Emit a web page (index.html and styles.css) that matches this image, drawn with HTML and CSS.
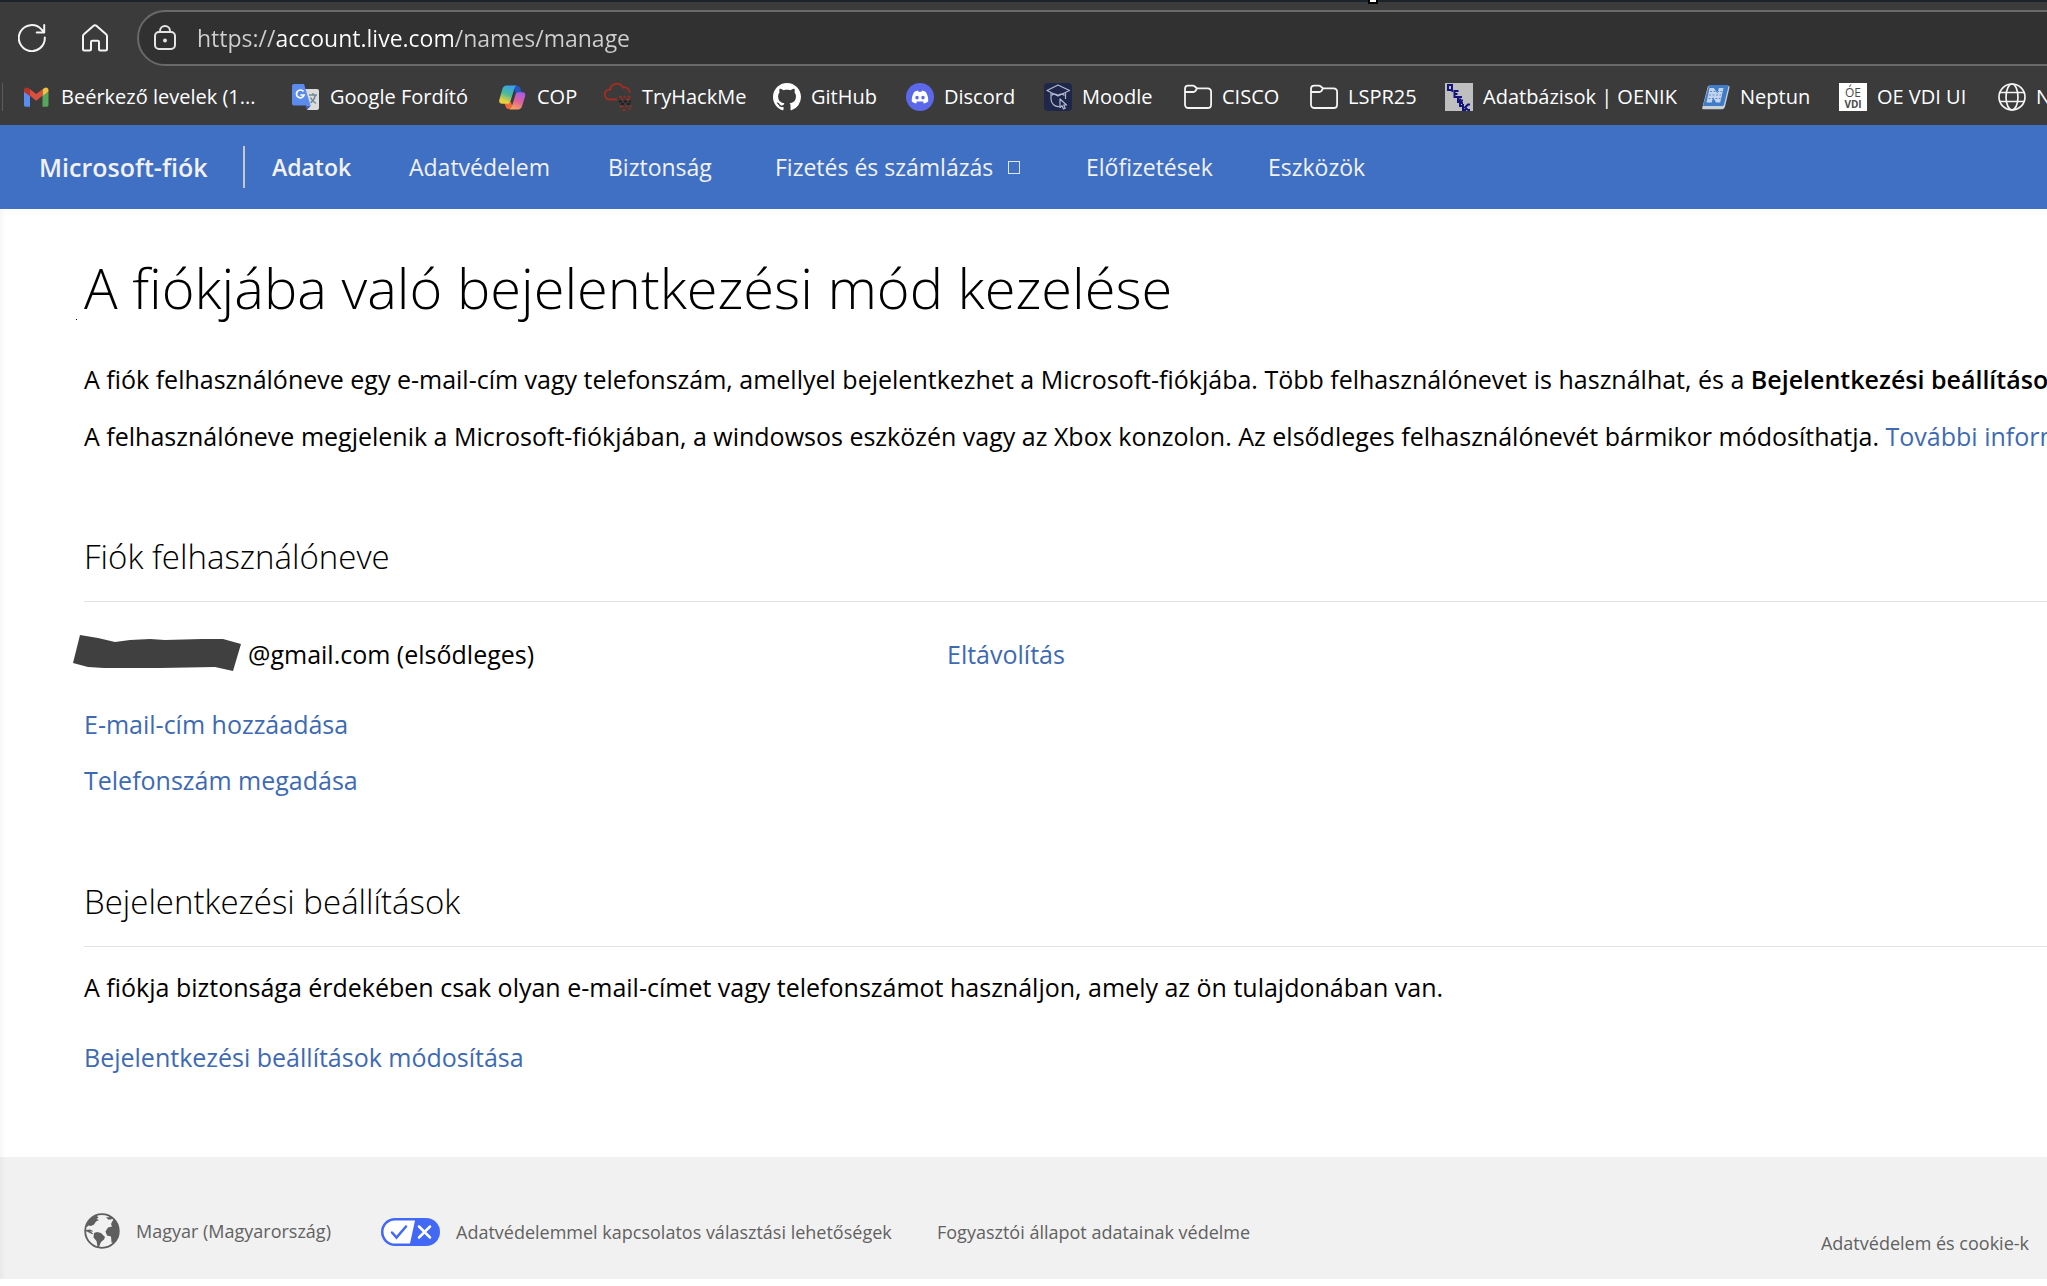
FILE: index.html
```html
<!DOCTYPE html>
<html lang="hu">
<head>
<meta charset="utf-8">
<title>A fiókjába való bejelentkezési mód kezelése</title>
<link rel="stylesheet" href="styles.css">
</head>
<body>
<div class="browser">
  <span class="window-handle"></span>
  <div class="toolbar">
    <div class="tools">
      <button class="tool" type="button" aria-label="Frissítés">
        <svg width="28" height="28" viewBox="0 0 28 28" fill="none" stroke="#f4f4f4" stroke-width="2" stroke-linecap="round" stroke-linejoin="round"><path d="M26.8 13.5a13 13 0 1 1-3.6-8.4L26 8.2M26.2 1v7.4h-7.5"/></svg>
      </button>
      <button class="tool" type="button" aria-label="Kezdőlap">
        <svg width="28" height="28" viewBox="0 0 28 28" fill="none" stroke="#f4f4f4" stroke-width="2" stroke-linejoin="round"><path d="M2 12.2c0-.8.3-1.4.9-1.9L12.6 1.8c.8-.7 2-.7 2.8 0l9.7 8.5c.6.5.9 1.100.9 1.900V25c0 .9-.6 1.500-1.500 1.500h-5c-.9 0-1.500-.6-1.500-1.500v-7c0-.8-.5-1.300-1.300-1.300h-5.400c-.8 0-1.300.5-1.300 1.300v7c0 .9-.6 1.500-1.500 1.500h-5C2.600 26.500 2 25.900 2 25z"/></svg>
      </button>
    </div>
    <div class="address">
      <svg width="24" height="26" viewBox="0 0 24 26" fill="none" stroke="#e4e4e4" stroke-width="2"><rect x="2" y="7" width="20" height="17" rx="4"/><path d="M7 7V6a5 5 0 0 1 10 0v1"/><circle cx="12" cy="15.500" r="2" fill="#e4e4e4" stroke="none"/></svg>
      <input class="url" type="text" aria-label="Címsor" value="https://account.live.com/names/manage">
    </div>
  </div>
  <nav class="bookmarks" aria-label="Kedvencek">
    <a href="#"><svg width="28" height="28" viewBox="0 0 28 28"><path d="M1 8.500v13.500c0 1 .8 1.700 1.700 1.700H7V11.500z" fill="#5b8df0"/><path d="M19.500 11.500v12.200h4.300c1 0 1.700-.8 1.700-1.700V8.500z" fill="#58a55c"/><path d="M19.500 6.500v6.500l6-4.500V7c0-2.200-2.400-3.300-4.200-2z" fill="#f2bf42"/><path d="M7 12.800V6.200l6.200 4.700 6.300-4.700v6.600l-6.300 4.900z" fill="#d8503f"/><path d="M1 7v1.700l6 4.500V6.300L5.300 5C3.400 3.700 1 4.800 1 7z" fill="#b53629"/></svg><span>Beérkező levelek (1...</span></a>
    <a href="#"><svg width="28" height="28" viewBox="0 0 28 28"><path d="M13 6h12c1.200 0 2 .8 2 2v17c0 1.200-.8 2-2 2H15z" fill="#dcdcdc"/><path d="M13.500 22.500H19L15 27z" fill="#3f5fb8"/><path d="M2 1h10l6.500 21.500H2c-1.200 0-2-.8-2-2V3c0-1.200.8-2 2-2z" fill="#5c8bee"/><path d="M11.500 8.600a3.900 3.900 0 1 0 .6 3.400H8.400" fill="none" stroke="#fff" stroke-width="1.700"/><path d="M17 12h8M21 10v2M23.500 12c-1 4-3 6.500-5 8M18.500 14.500c1 2.500 3 4.500 5.500 6" fill="none" stroke="#6f8a96" stroke-width="1.400"/></svg><span>Google Fordító</span></a>
    <a href="#"><svg width="28" height="28" viewBox="0 0 28 28"><defs><linearGradient id="copA" x1=".6" y1="0" x2=".2" y2="1"><stop offset="0" stop-color="#3aa0ee"/><stop offset=".45" stop-color="#48b99c"/><stop offset=".85" stop-color="#e8d13c"/></linearGradient><linearGradient id="copB" x1=".7" y1="0" x2=".3" y2="1"><stop offset="0" stop-color="#a75be8"/><stop offset=".5" stop-color="#e0619c"/><stop offset="1" stop-color="#f6a45c"/></linearGradient></defs><path d="M14 3h4.500c1.700 0 2.500 1.200 3 2.800l1.300 4.200h-6z" fill="#2456c4"/><path d="M14 26H9.500c-1.700 0-2.500-1.200-3-2.800L5 19h7z" fill="#ec6a3c"/><path d="M7.500 2.500H18c-1.600.3-2.200 1.600-2.800 3.500l-3.700 12c-.5 1.600-1.500 2.700-3.200 2.700H3c-2.300 0-3.300-1.800-2.600-4.300l3-10.500c.6-2.100 2-3.400 4.100-3.400z" fill="url(#copA)"/><path d="M19 26.500H10c1.600-.3 2.400-1.600 3-3.500l3.400-11c.5-1.600 1.500-2.700 3.200-2.700h4c2.300 0 3.200 1.800 2.500 4.300l-3 9.500c-.6 2.100-2 3.400-4.100 3.400z" fill="url(#copB)"/></svg><span>COP</span></a>
    <a href="#"><svg width="28" height="28" viewBox="0 0 28 28" fill="none" stroke="#a52d22" stroke-width="1.800"><path d="M13 16.500H5.500a5 5 0 0 1-.5-9.900h1.200A6.800 6.800 0 0 1 19 4.500c3.600-.5 6.300 1.700 6.800 5"/><path d="M15 14h3m1.500 0h2m2 0h3M17 16.500h2m3 0h4M15.500 23.500h4m2 0h2m2 0h2M18.500 27h3m3-1h2" stroke-width="1.300"/><path d="M15 18.500h3m2 0h3m2 0h2M17 21h3m3 0h3" stroke="#202020"/></svg><span>TryHackMe</span></a>
    <a href="#"><svg width="28" height="28" viewBox="0 0 16 16"><path fill="#fff" d="M8 0C3.580 0 0 3.580 0 8c0 3.540 2.290 6.530 5.470 7.590.4.070.55-.17.55-.38 0-.19-.01-.82-.01-1.490-2.010.37-2.530-.49-2.690-.94-.09-.23-.48-.94-.82-1.130-.28-.15-.68-.52-.01-.53.63-.01 1.080.58 1.230.82.72 1.210 1.870.87 2.330.66.07-.52.28-.87.51-1.070-1.780-.2-3.640-.89-3.640-3.950 0-.87.31-1.590.82-2.150-.08-.2-.36-1.020.08-2.120 0 0 .67-.21 2.200.82.64-.18 1.320-.27 2-.27s1.360.09 2 .27c1.530-1.040 2.200-.82 2.200-.82.44 1.100.16 1.920.08 2.120.51.56.82 1.270.82 2.150 0 3.070-1.870 3.750-3.650 3.950.29.25.54.73.54 1.480 0 1.070-.01 1.930-.01 2.200 0 .21.15.46.55.38A8.010 8.010 0 0 0 16 8c0-4.420-3.580-8-8-8z"/></svg><span>GitHub</span></a>
    <a href="#"><svg width="28" height="28" viewBox="0 0 28 28"><circle cx="14" cy="14" r="14" fill="#5b68ea"/><path fill="#fff" fill-rule="evenodd" d="M8.400 8.700c1.200-.6 2.300-.9 3.500-1.100l.6 1.200h3l.6-1.200c1.200.2 2.400.5 3.500 1.100 2 3 2.900 6.200 2.600 9.800-1.300 1-2.700 1.600-4.200 2l-1-1.600.9-.5H10.100l.9.500-1 1.600c-1.500-.4-2.900-1-4.200-2-.3-3.600.6-6.800 2.600-9.800zM11 12.700a1.700 1.900 0 1 0 0 3.800 1.700 1.900 0 0 0 0-3.800zm6 0a1.700 1.900 0 1 0 0 3.800 1.700 1.900 0 0 0 0-3.800z"/></svg><span>Discord</span></a>
    <a href="#"><svg width="28" height="28" viewBox="0 0 28 28"><rect width="28" height="28" rx="4" fill="#1e2749"/><g fill="none" stroke="#b4b9d0" stroke-width="1.200" stroke-linejoin="round"><path d="M14 2 25.500 7.500 14 13 3 7.500z"/><path d="M7 10v6a7.500 7.500 0 0 0 8.500 7.500M21.500 10v6"/><path d="M7.500 12.500c2-1.800 3.800-2 6.500 0 2.700-2 4.500-1.800 6.500 0"/><path d="M16 16v8.500l2-1.800 1.500 3.300 1.700-.8-1.500-3.200h2.800z" fill="#1e2749"/></g></svg><span>Moodle</span></a>
    <a href="#"><svg width="28" height="28" viewBox="0 0 28 28" fill="none" stroke="#f4f4f4" stroke-width="1.800" stroke-linejoin="round"><path d="M1 6c0-2 1.200-3.300 3.200-3.300h4.600c.8 0 1.400.2 2 .8L13 5.300h10.500c2.200 0 3.600 1.400 3.600 3.600v12.500c0 2.200-1.400 3.600-3.600 3.600h-19C2.400 25 1 23.600 1 21.400zM1 9h8.500c.8 0 1.300-.3 1.800-.8L13 5.300"/></svg><span>CISCO</span></a>
    <a href="#"><svg width="28" height="28" viewBox="0 0 28 28" fill="none" stroke="#f4f4f4" stroke-width="1.800" stroke-linejoin="round"><path d="M1 6c0-2 1.200-3.300 3.200-3.300h4.600c.8 0 1.400.2 2 .8L13 5.300h10.500c2.200 0 3.600 1.400 3.600 3.600v12.500c0 2.200-1.400 3.600-3.600 3.600h-19C2.400 25 1 23.600 1 21.400zM1 9h8.500c.8 0 1.300-.3 1.800-.8L13 5.300"/></svg><span>LSPR25</span></a>
    <a href="#"><svg width="28" height="28" viewBox="0 0 28 28"><path fill="#bfbfbf" d="M0 0h28v28H0z"/><path fill="none" stroke="#14147c" stroke-width="2" d="M3 2h4v5H3zM6 7l2 1.500M13.500 8h-4v6h4M9.500 11h3M17 14h-4v5h4M13 16.500h3M18 17.500h-3v5.500h3.500M15 20h3M18 21v6M25 21.500h-2l-3 3 3 2.500h2M17 27h4"/></svg><span>Adatbázisok | OENIK</span></a>
    <a href="#"><svg width="28" height="28" viewBox="0 0 28 28"><path d="M6 3h20.500c1 0 1.200.7 1 1.500l-4.500 19c-.4 1.800-1.400 2.800-3 2.800H1.500C.4 26.300 0 25.500.3 24.500z" fill="#c9d0d8"/><path d="M7 2h18.500c1 0 1.300.6 1 1.500l-4.500 18c-.3 1-1 1.500-2 1.500H1z" fill="#3f7cc8"/><path d="M4.500 19.500 7.500 5h4.300l3.700 5.500L16.800 5h4.700l-3.300 14.500H14l-3-5.500-1.200 5.500z" fill="#c4d4ec"/><path d="M8 8.500h12M7 12h12M6.500 15.500h12" stroke="#5d90d2" stroke-width="1" stroke-dasharray="2 1.500"/></svg><span>Neptun</span></a>
    <a href="#"><svg width="28" height="28" viewBox="0 0 28 28"><path fill="#fff" d="M0 0h28v28H0z"/><g font-family="Open Sans, sans-serif" fill="#4a4a4a" text-anchor="middle"><text x="14" y="14" font-size="12">ÓE</text><text x="14" y="25" font-size="10" font-weight="700">VDI</text></g></svg><span>OE VDI UI</span></a>
    <a href="#"><svg width="28" height="28" viewBox="0 0 28 28" fill="none" stroke="#f4f4f4" stroke-width="1.700"><circle cx="14" cy="14" r="13"/><ellipse cx="14" cy="14" rx="6" ry="13"/><path d="M2 9.500h24M2 18.500h24"/></svg><span>N</span></a>
  </nav>
</div>

<header class="site-header">
  <a class="brand" href="#">Microsoft-fiók</a>
  <nav class="site-nav" aria-label="Fiók">
    <a class="current" href="#">Adatok</a>
    <a href="#">Adatvédelem</a>
    <a href="#">Biztonság</a>
    <a class="has-menu" href="#">Fizetés és számlázás<i class="menu-mark"></i></a>
    <a href="#">Előfizetések</a>
    <a href="#">Eszközök</a>
  </nav>
</header>

<main class="content">
  <h1>A fiókjába való bejelentkezési mód kezelése</h1>
  <p>A fiók felhasználóneve egy e-mail-cím vagy telefonszám, amellyel bejelentkezhet a Microsoft-fiókjába. Több felhasználónevet is használhat, és a <b>Bejelentkezési beállítások</b></p>
  <p>A felhasználóneve megjelenik a Microsoft-fiókjában, a windowsos eszközén vagy az Xbox konzolon. Az elsődleges felhasználónevét bármikor módosíthatja. <a href="#">További információ</a></p>

  <section class="names">
    <h2>Fiók felhasználóneve</h2>
    <div class="alias">
      <div class="alias-name">
        <svg class="redaction" width="157" height="38" viewBox="0 0 157 38"><path fill="#404040" d="M-4 0 14 3l17 4 15-2 20-1 15 1 37-1h21l18 5-8 27-18-4-55 1H20L4 32l-15-4z"/></svg>
        <span>@gmail.com (elsődleges)</span>
      </div>
      <a href="#">Eltávolítás</a>
    </div>
    <a href="#">E-mail-cím hozzáadása</a>
    <a href="#">Telefonszám megadása</a>
  </section>

  <section class="preferences">
    <h2>Bejelentkezési beállítások</h2>
    <p>A fiókja biztonsága érdekében csak olyan e-mail-címet vagy telefonszámot használjon, amely az ön tulajdonában van.</p>
    <a href="#">Bejelentkezési beállítások módosítása</a>
  </section>
</main>

<footer class="site-footer">
  <a class="locale" href="#"><svg width="36" height="36" viewBox="0 0 36 36"><circle cx="18" cy="18" r="16.800" fill="none" stroke="#5e5e5e" stroke-width="1.800"/><path fill="#5e5e5e" d="M3.500 10C5.500 6 9 3.500 12.500 2.500l2 2-2 1.500 2.500 1-3 1.500-2 3-3 1.500-2.500-.5-2 2zM2 17l4-.5 3 1.500-.5.800L6 18l3 2.500-.7.700L1.800 18zM10 20l3-1 4 1 4 4-1 2.500-3 2.500-2 5-1.500-.5-1-5.500-3-3.500zM22 4l2.500.5 1.500-1.500 3 2-2 1.500h-3zM30 6l4.500 8v10L30 30l-2.500-.5-.5-6-4-1-1.500-4 2.500-4 4-1-1-2.500 1.500-3z"/></svg><span>Magyar (Magyarország)</span></a>
  <a class="choices" href="#"><svg width="59" height="28" viewBox="0 0 59 28"><rect width="59" height="28" rx="14" fill="#4169f5"/><path fill="#fff" d="M14 2.500h20L29 25.500H14a11.500 11.500 0 0 1 0-23z"/><path d="m11 14.500 4.500 5L25 8.500" fill="none" stroke="#4169f5" stroke-width="2.500" stroke-linecap="round"/><path d="m38 8.500 11 11m0-11-11 11" stroke="#fff" stroke-width="2.500" stroke-linecap="round"/></svg><span>Adatvédelemmel kapcsolatos választási lehetőségek</span></a>
  <a class="health" href="#">Fogyasztói állapot adatainak védelme</a>
  <a class="privacy" href="#">Adatvédelem és cookie-k</a>
</footer>
</body>
</html>
```
FILE: styles.css
```css
* { box-sizing: border-box; }

body {
  margin: 0;
  overflow-x: hidden;
  background: #fff;
  color: #000;
  font: 25px/32px "Open Sans", "Noto Sans", sans-serif;
  white-space: nowrap;
}

a { color: #3d6ab3; text-decoration: none; }
b { font-weight: 600; }
svg { display: block; flex: none; }

/* Browser frame */
.browser {
  position: relative;
  overflow: hidden;
  padding-top: 2px;
  background: linear-gradient(#1c2229 2px, #3b3b3b 2px);
}

.window-handle {
  position: absolute;
  top: 0;
  left: 1368px;
  width: 10px;
  height: 4px;
  background: #fff;
  border: 2px solid #000;
  border-top: 0;
}

.toolbar {
  display: flex;
  align-items: center;
  gap: 28px;
  padding: 8px 0 0 18px;
}

.tools {
  display: flex;
  gap: 35px;
}

.tool {
  padding: 0;
  border: 0;
  background: none;
}

.address {
  display: flex;
  flex: 1;
  align-items: center;
  gap: 20px;
  height: 56px;
  margin-right: -32px;
  padding-left: 14px;
  background: #313131;
  border: 2px solid #696969;
  border-radius: 28px;
}

.url {
  flex: 1;
  height: 40px;
  padding: 0;
  border: 0;
  outline: 0;
  color: #fff;
  font: inherit;
  font-size: 23px;
  background: linear-gradient(90deg, #cfcfcf 79px, #fff 79px 259px, #cfcfcf 259px);
  background-clip: text;
  -webkit-text-fill-color: transparent;
}

.bookmarks {
  position: relative;
  display: grid;
  grid-template-columns: 269px 207px 105px 169px 133px 138px 140px 126px 135px 257px 137px 159px 60px;
  height: 59px;
  padding: 3px 0 0 23px;
  font-size: 20px;
}

.bookmarks::before {
  content: "";
  position: absolute;
  top: 17px;
  left: 2px;
  width: 1px;
  height: 28px;
  background: #5c5c5c;
}

.bookmarks a {
  display: flex;
  align-items: center;
  gap: 10px;
  color: #fff;
}

/* Account header */
.site-header {
  display: flex;
  align-items: center;
  height: 84px;
  padding-left: 39px;
  background: #4070c4;
}

.site-header a { color: #f2f2f2; }

.brand {
  width: 206px;
  height: 42px;
  border-right: 2px solid #c8c8c8;
  font-weight: 600;
  line-height: 42px;
}

.site-nav {
  display: grid;
  grid-template-columns: 137px 199px 167px 311px 182px auto;
  padding-left: 27px;
  font-size: 23px;
}

.site-nav .current { font-weight: 600; }

.has-menu {
  display: flex;
  align-items: center;
  gap: 15px;
}

.menu-mark {
  width: 12px;
  height: 13px;
  border: 1px solid #e0e6f4;
}

/* Page content */
.content {
  padding: 38px 0 84px 84px;
  overflow: hidden;
  background: linear-gradient(90deg, #f7f7f7, #fff 6px);
}

h1 {
  position: relative;
  margin: 0 0 36px;
  font-size: 56px;
  font-weight: 300;
  line-height: 80px;
}

h1::before {
  content: "";
  position: absolute;
  top: 72px;
  left: -8px;
  width: 1px;
  height: 1px;
  background: #000;
}

.content p { margin: 0 0 25px; }

h2 {
  margin: 0;
  padding-bottom: 24px;
  border-bottom: 1px solid #e3e3e3;
  font-size: 33px;
  font-weight: 300;
  line-height: 40px;
}

.names, .preferences {
  display: flex;
  flex-direction: column;
  align-items: flex-start;
}

.names h2, .preferences h2 { align-self: stretch; }

.names { gap: 24px; padding-top: 60px; }

.alias {
  display: grid;
  grid-template-columns: 863px auto;
  align-items: center;
  padding: 12px 0 14px;
}

.alias-name {
  display: flex;
  align-items: center;
  gap: 7px;
  height: 32px;
}

.redaction { overflow: visible; }

.preferences { padding-top: 86px; }
.preferences h2 { margin-bottom: 24px; }
.preferences p { margin-bottom: 38px; }

/* Footer */
.site-footer {
  display: flex;
  align-items: center;
  height: 122px;
  padding: 25px 18px 0 84px;
  background: linear-gradient(90deg, #e9e9e9, #f1f1f1 6px);
  font-size: 18px;
  line-height: 24px;
}

.site-footer a { color: #616161; }

.locale, .choices {
  display: flex;
  align-items: center;
  gap: 16px;
}

.locale { width: 297px; }
.choices { width: 556px; }
.choices, .health { margin-top: 3px; }
.privacy { margin: 24px 0 0 auto; }
```
